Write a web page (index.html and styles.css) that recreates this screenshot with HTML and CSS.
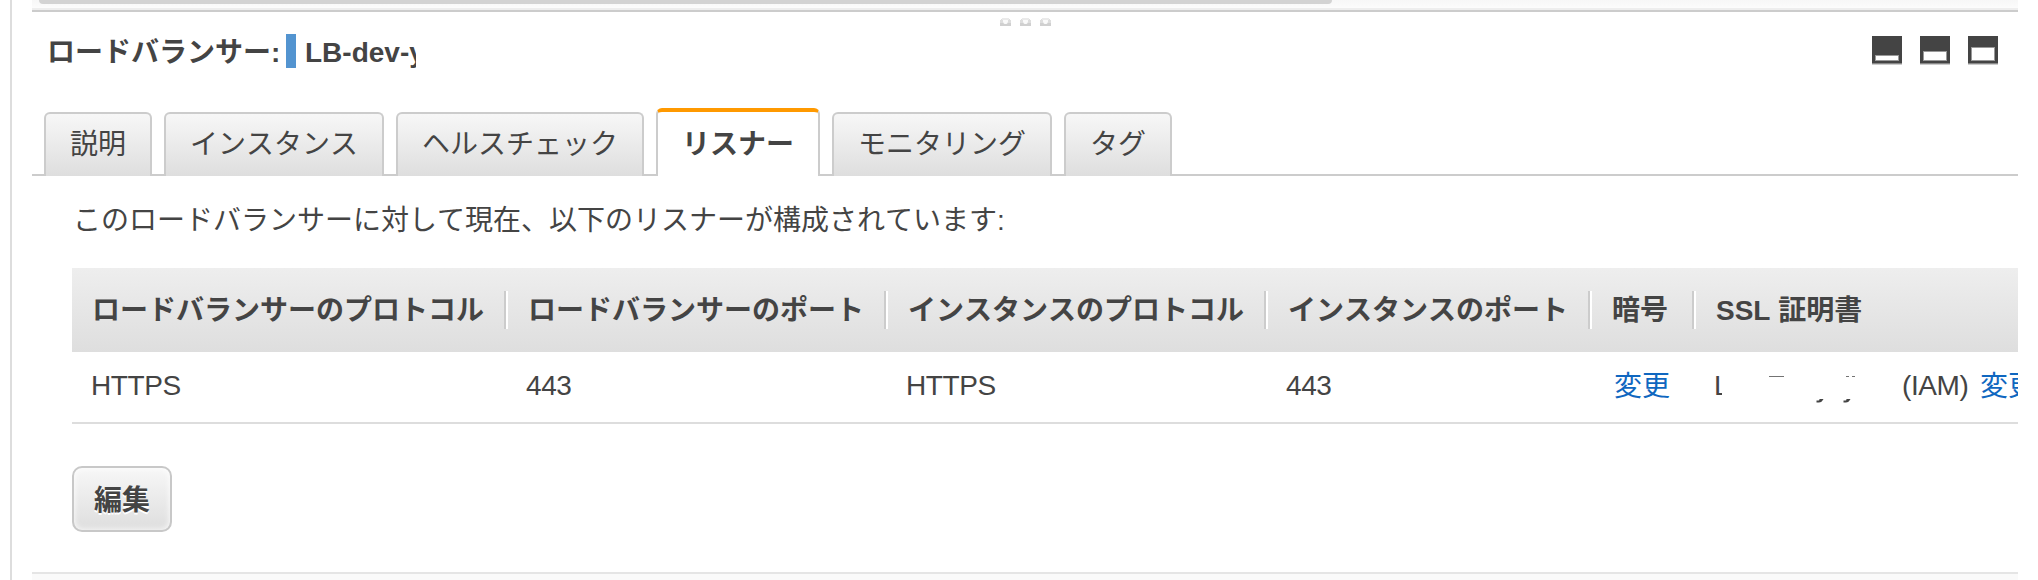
FILE: index.html
```html
<!DOCTYPE html>
<html lang="ja">
<head>
<meta charset="utf-8">
<title>ロードバランサー</title>
<link rel="stylesheet" href="styles.css">
</head>
<body>
<div class="page">
  <main class="panel">
    <div class="scroll-track"><div class="scroll-thumb"></div></div>
    <div class="grip">
      <svg width="52" height="10" viewBox="0 0 52 10">
        <defs>
          <g id="dot">
            <path d="M1 2h9v1h1v6H0V3h1z" fill="#dedede"/>
            <path d="M2 1h7v2H2z" fill="#eaeaea"/>
            <path d="M0 6h3l1 1h3l1-1h3v3H0z" fill="#d0d0d0"/>
            <path d="M3 3h5v2L6.500 7h-2L3 5z" fill="#fafafa"/>
          </g>
        </defs>
        <use href="#dot"/><use href="#dot" x="20"/><use href="#dot" x="40"/>
      </svg>
    </div>
    <header class="heading">
      <span class="heading-label">ロードバランサー:</span>
      <span class="marker"></span>
      <span class="heading-name">LB-dev-<span class="clipped">y</span></span>
      <div class="view-buttons">
        <svg width="30" height="29" viewBox="0 0 30 29"><path d="M0 0h30v27H0z" fill="#444"/><path d="M0 27h30v1H0z" fill="#888"/><path d="M0 28h30v1H0z" fill="#ccc"/><rect x="3.500" y="19.500" width="23" height="5" fill="#fff" stroke="#999"/></svg>
        <svg width="30" height="29" viewBox="0 0 30 29"><path d="M0 0h30v27H0z" fill="#444"/><path d="M0 27h30v1H0z" fill="#888"/><path d="M0 28h30v1H0z" fill="#ccc"/><rect x="3.500" y="15.500" width="23" height="9" fill="#fff" stroke="#999"/></svg>
        <svg width="30" height="29" viewBox="0 0 30 29"><path d="M0 0h30v27H0z" fill="#444"/><path d="M0 27h30v1H0z" fill="#888"/><path d="M0 28h30v1H0z" fill="#ccc"/><rect x="3.500" y="11.500" width="23" height="13" fill="#fff" stroke="#999"/></svg>
      </div>
    </header>
    <nav class="tabs">
      <span class="tab">説明</span>
      <span class="tab">インスタンス</span>
      <span class="tab">ヘルスチェック</span>
      <span class="tab active">リスナー</span>
      <span class="tab">モニタリング</span>
      <span class="tab">タグ</span>
    </nav>
    <section class="content">
      <p class="intro">このロードバランサーに対して現在、以下のリスナーが構成されています:</p>
      <div class="table">
        <div class="row head">
          <div class="th">ロードバランサーのプロトコル</div>
          <div class="th">ロードバランサーのポート</div>
          <div class="th">インスタンスのプロトコル</div>
          <div class="th">インスタンスのポート</div>
          <div class="th">暗号</div>
          <div class="th">SSL 証明書</div>
        </div>
        <div class="row body">
          <div class="td">HTTPS</div>
          <div class="td">443</div>
          <div class="td">HTTPS</div>
          <div class="td">443</div>
          <div class="td cipher"><a class="link">変更</a></div>
          <div class="td cert">
            <span class="cert-name">L</span>
            <svg class="remnant" width="180" height="30" viewBox="0 0 180 30"><g fill="#444"><path d="M47 3h15v1H47zM124 3h3v1h-3zM130 3h3v1h-3z" opacity=".75"/><path d="M97.500 26h4l-1 1.500q-1 2-3.500 2h-2.500v-2h2q1 0 1-1.500zM124.500 26h4l-1 1.500q-1 2-3.500 2h-2.500v-2h2q1 0 1-1.500z"/></g></svg>
            <span class="origin">(IAM)</span>
            <a class="link">変更</a>
          </div>
        </div>
      </div>
      <button class="edit">編集</button>
    </section>
    <footer class="bottom"></footer>
  </main>
</div>
</body>
</html>
```
FILE: styles.css
```css
* { box-sizing: border-box; }
body {
  margin: 0;
  background: #fff;
  color: #444;
  font-family: "Liberation Sans", "Noto Sans CJK JP", sans-serif;
  font-size: 28px;
  font-kerning: none;
  line-height: 40px;
  white-space: nowrap;
}
.page {
  height: 580px;
  padding: 0 20px 0 10px;
  overflow: hidden;
}
.panel {
  display: flex;
  flex-direction: column;
  height: 580px;
  border-left: 2px solid #ddd;
  padding-left: 20px;
}
.scroll-track {
  height: 12px;
  flex: none;
  padding-left: 7px;
  background: linear-gradient(#f7f7f7, #fcfcfc 8px, #eee 8px, #eee 10px, #ccc 10px);
}
.scroll-thumb {
  width: 1293px;
  height: 4px;
  border-radius: 0 0 6px 6px;
  background: #d3d3d3;
}
.grip {
  display: flex;
  height: 14px;
  flex: none;
  padding: 5px 0 0 968px;
}
.heading {
  display: flex;
  height: 82px;
  flex: none;
  padding: 5px 20px 0 15px;
  font-weight: bold;
}
.heading-label {
  width: 239px;
  padding-top: 2px;
}
.marker {
  width: 10px;
  height: 34px;
  margin-top: 3px;
  background: #5394d0;
}
.heading-name {
  display: flex;
  width: 112px;
  padding-top: 2px;
  margin-left: 9px;
}
.clipped {
  width: 7px;
  overflow: hidden;
}
.view-buttons {
  display: flex;
  gap: 18px;
  margin: 5px 0 0 auto;
}
.tabs {
  display: flex;
  flex: none;
  align-items: flex-end;
  gap: 12px;
  height: 68px;
  padding-left: 12px;
  background: linear-gradient(#ccc, #ccc) bottom / 100% 2px no-repeat;
}
.tab {
  height: 64px;
  padding: 11px 24px 0;
  border: 2px solid #ccc;
  border-bottom: 0;
  border-radius: 6px 6px 0 0;
  background: linear-gradient(#f7f7f7, #dedede);
}
.tab.active {
  height: 68px;
  padding-top: 13px;
  border-top: 4px solid #f90;
  background: #fff;
  font-weight: bold;
}
.content {
  height: 396px;
  flex: none;
  padding-left: 40px;
  overflow: hidden;
}
.intro {
  height: 92px;
  margin: 0;
  padding: 25px 0 0 1px;
}
.row {
  display: grid;
  grid-template-columns: 436px 380px 380px 324px 104px 322px;
}
.head {
  height: 84px;
  align-items: center;
  background: linear-gradient(#eee, #dedede);
  font-weight: bold;
}
.th {
  height: 38px;
  padding-left: 20px;
  line-height: 40px;
  background: linear-gradient(90deg, #ccc 2px, #fff 2px) right / 4px 38px no-repeat;
}
.th:last-child { background: none; }
.body {
  height: 72px;
  border-bottom: 2px solid #ddd;
}
.td {
  height: 70px;
  padding: 14px 0 0 18px;
  letter-spacing: -.4px;
}
.td:first-child { padding-left: 19px; }
.td.cipher {
  padding: 15px 0 0 22px;
}
.link {
  color: #0f67c0;
  letter-spacing: 0;
}
.cert {
  display: flex;
  overflow: hidden;
}
.cert-name {
  width: 8px;
  flex: none;
  overflow: hidden;
}
.remnant {
  flex: none;
  margin: 7px 0 0;
}
.origin {
  width: 78px;
  flex: none;
}
.cert .link { padding-top: 1px; }
.edit {
  display: block;
  width: 100px;
  height: 66px;
  margin-top: 42px;
  padding: 3px 0 0;
  border: 2px solid #c8c8c8;
  border-radius: 10px;
  background: linear-gradient(#f7f7f7, #dedede);
  box-shadow: inset 0 0 6px #fff;
  color: #444;
  font: bold 28px/40px "Liberation Sans", "Noto Sans CJK JP", sans-serif;
  text-shadow: 0 2px 0 #fff;
}
.bottom {
  height: 8px;
  flex: none;
  border-top: 2px solid #e5e5e5;
  background: #fafafa;
}
```
